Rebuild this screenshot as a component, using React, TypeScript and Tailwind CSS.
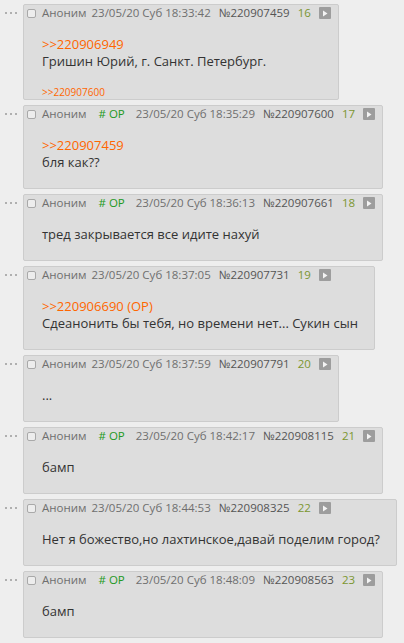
import React from "react";

type Post = {
  op?: boolean;
  time: string;
  num: string;
  idx: number;
  lines: { text: string; link?: boolean }[];
  refs?: string[];
};

const posts: Post[] = [
  {
    time: "18:33:42",
    num: "220907459",
    idx: 16,
    lines: [
      { text: ">>220906949", link: true },
      { text: "Гришин Юрий, г. Санкт. Петербург." },
    ],
    refs: [">>220907600"],
  },
  {
    op: true,
    time: "18:35:29",
    num: "220907600",
    idx: 17,
    lines: [{ text: ">>220907459", link: true }, { text: "бля как??" }],
  },
  {
    op: true,
    time: "18:36:13",
    num: "220907661",
    idx: 18,
    lines: [{ text: "тред закрывается все идите нахуй" }],
  },
  {
    time: "18:37:05",
    num: "220907731",
    idx: 19,
    lines: [
      { text: ">>220906690 (OP)", link: true },
      { text: "Сдеанонить бы тебя, но времени нет... Сукин сын" },
    ],
  },
  { time: "18:37:59", num: "220907791", idx: 20, lines: [{ text: "..." }] },
  { op: true, time: "18:42:17", num: "220908115", idx: 21, lines: [{ text: "бамп" }] },
  {
    time: "18:44:53",
    num: "220908325",
    idx: 22,
    lines: [{ text: "Нет я божество,но лахтинское,давай поделим город?" }],
  },
  { op: true, time: "18:48:09", num: "220908563", idx: 23, lines: [{ text: "бамп" }] },
];

function Dots() {
  return (
    <div className="flex w-[23px] shrink-0 gap-[3px] pl-[5px] pt-[8px]">
      <span className="h-[2px] w-[2px] rounded-full bg-[#9a9a9a]" />
      <span className="h-[2px] w-[2px] rounded-full bg-[#9a9a9a]" />
      <span className="h-[2px] w-[2px] rounded-full bg-[#9a9a9a]" />
    </div>
  );
}

function PlayIcon() {
  return (
    <span className="flex h-[12px] w-[12px] items-center justify-center rounded-[1px] bg-[#9d9d9d]">
      <svg width="6" height="7" viewBox="0 0 6 7">
        <path d="M1 0.5 L5.5 3.5 L1 6.5 Z" fill="#f4f4f4" />
      </svg>
    </span>
  );
}

function PostCard({ p }: { p: Post }) {
  return (
    <div className="w-fit rounded-[2px] border border-[#cccccc] bg-[#dddddd] pr-[7px]">
      <div className="flex h-[16px] items-center whitespace-nowrap pl-[3px] text-[11.5px] leading-[16px] text-[#6f6f6f]">
        <span className="mr-[6px] h-[9px] w-[9px] rounded-[2px] border border-[#a9a9a9] bg-[#ededed]" />
        <span>Аноним</span>
        {p.op && <span className="ml-[12px] text-[#229922]"># OP</span>}
        <span className={p.op ? "ml-[11px]" : "ml-[5px]"}>23/05/20 Суб {p.time}</span>
        <span className="ml-[8px] text-[#555555]">№{p.num}</span>
        <span className="ml-[8px] text-[#7b9630]">{p.idx}</span>
        <span className="ml-[8px]">
          <PlayIcon />
        </span>
      </div>
      <div className="mb-[17px] ml-[18px] mr-[9px] mt-[15px] whitespace-nowrap text-[13px] leading-[17px] text-[#333333]">
        {p.lines.map((l, i) => (
          <div key={i} className={l.link ? "text-[#ff6600]" : ""}>
            {l.text}
          </div>
        ))}
      </div>
      {p.refs && (
        <div className="ml-[18px] pb-[1px] text-[10px] leading-[11px] text-[#ff6600]">
          {p.refs.map((r) => (
            <span key={r}>{r}</span>
          ))}
        </div>
      )}
    </div>
  );
}

export default function App() {
  return (
    <div
      className="min-h-[643px] bg-[#eeeeee] pt-[4px]"
      style={{ fontFamily: '"Open Sans", "Noto Sans", sans-serif' }}
    >
      <div className="flex flex-col gap-[5px]">
        {posts.map((p) => (
          <div key={p.num} className="flex">
            <Dots />
            <PostCard p={p} />
          </div>
        ))}
      </div>
    </div>
  );
}
